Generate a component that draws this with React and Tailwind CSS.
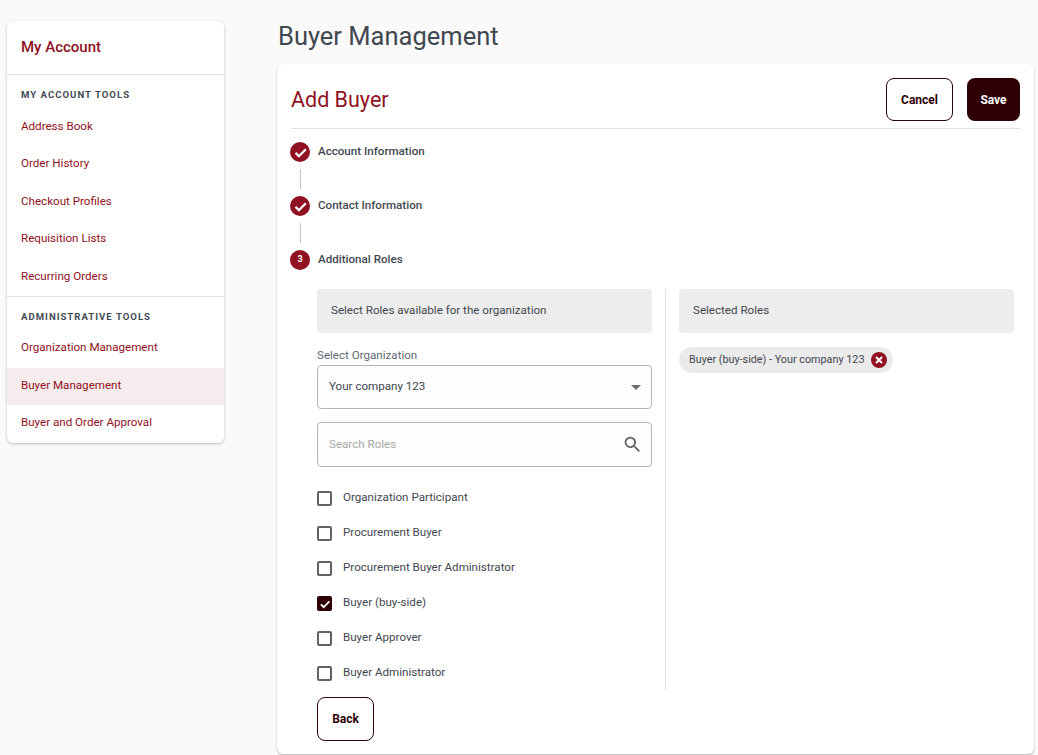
import React from "react";

const accountLinks = ["Address Book", "Order History", "Checkout Profiles", "Requisition Lists", "Recurring Orders"];
const adminLinks = ["Organization Management", "Buyer Management", "Buyer and Order Approval"];
const roles = [
  "Organization Participant",
  "Procurement Buyer",
  "Procurement Buyer Administrator",
  "Buyer (buy-side)",
  "Buyer Approver",
  "Buyer Administrator",
];

const Check = ({ className }) => (
  <svg viewBox="0 0 24 24" className={className} fill="none" stroke="white" strokeWidth="3.2">
    <path d="M5 12.5l4.8 4.8L19.5 7.5" />
  </svg>
);

const SideLink = ({ label, active }) => (
  <div className={`h-[37.4px] pl-3.5 pb-0.5 flex items-center text-[11.6px] text-[#8f1122] ${active ? "bg-[#f6eced]" : ""}`}>
    {label}
  </div>
);

const SideHeading = ({ label, className }) => (
  <div className={`pl-3.5 text-[9.6px] leading-[15px] font-bold tracking-[1px] text-[#424b54] ${className}`}>
    {label}
  </div>
);

const Step = ({ label, number }) => (
  <div className="flex items-center gap-2 h-5">
    <div className="w-5 h-5 rounded-full bg-[#8f1122] flex items-center justify-center text-white text-[9px] font-bold">
      {number || <Check className="w-[17px] h-[17px]" />}
    </div>
    <span className="text-[11.6px] font-medium text-[#3f4750] -mt-px">{label}</span>
  </div>
);

const StepLine = () => <div className="ml-[9.5px] my-[7px] w-px h-5 bg-[#c4c4c4]" />;

const Role = ({ label, checked }) => (
  <div className="flex items-center h-[35px] gap-[11px]">
    {checked ? (
      <div className="w-[15px] h-[15px] rounded-[2px] bg-[#2e0005] flex items-center justify-center">
        <Check className="w-3.5 h-3.5" />
      </div>
    ) : (
      <div className="w-[15px] h-[15px] rounded-[2px] border-2 border-[#5f6368]" />
    )}
    <span className="text-[11.6px] text-[#3f4750] -mt-0.5">{label}</span>
  </div>
);

export default function App() {
  return (
    <div className="min-h-[755px] bg-[#fafafa] flex font-['Roboto',sans-serif] overflow-hidden">
      <aside className="w-[217px] ml-[7px] mt-[21px] self-start bg-white rounded-md shadow-[0_1px_3px_rgba(0,0,0,0.25)] overflow-hidden shrink-0">
        <div className="h-[54px] pl-3.5 flex items-center text-[15px] font-medium text-[#8f1122] border-b border-[#e0e0e0]">
          My Account
        </div>
        <SideHeading label="MY ACCOUNT TOOLS" className="h-[34px] pt-[11.5px]" />
        {accountLinks.map((l) => (
          <SideLink key={l} label={l} />
        ))}
        <div className="border-t border-[#e0e0e0]">
          <SideHeading label="ADMINISTRATIVE TOOLS" className="h-[33.5px] pt-3" />
          {adminLinks.map((l) => (
            <SideLink key={l} label={l} active={l === "Buyer Management"} />
          ))}
        </div>
      </aside>

      <main className="ml-[53px] w-[757px] shrink-0">
        <h1 className="h-[64px] pt-[21px] pl-px text-[25.5px] leading-[30px] text-[#3f4750]">Buyer Management</h1>
        <div className="h-[690px] bg-white rounded-md shadow-[0_1px_2px_rgba(0,0,0,0.3)] pt-3.5 px-3.5">
          <div className="h-[51px] flex justify-between border-b border-[#e0e0e0]">
            <h2 className="text-[21.5px] leading-[44px] text-[#8f1122]">Add Buyer</h2>
            <div className="flex gap-3.5">
              <button className="w-[67px] h-[43px] rounded-lg border border-[#2e0005] bg-white text-xs font-bold text-[#2e0005]">
                Cancel
              </button>
              <button className="w-[53px] h-[43px] rounded-lg bg-[#2e0005] text-xs font-bold text-white">Save</button>
            </div>
          </div>

          <div className="pt-[13px] -ml-px">
            <Step label="Account Information" />
            <StepLine />
            <Step label="Contact Information" />
            <StepLine />
            <Step label="Additional Roles" number="3" />
          </div>

          <div className="mt-[19px] ml-[26px] flex">
            <div className="w-[349px] h-[401px] pr-[13px] border-r border-[#e0e0e0]">
              <div className="h-11 px-3.5 flex items-center rounded bg-[#ededed] text-[11.6px] text-[#3f4750]">
                Select Roles available for the organization
              </div>
              <div className="mt-3.5 text-[11.6px] leading-4 text-[#5f6873]">Select Organization</div>
              <div className="mt-[2px] h-11 px-[11px] flex items-center justify-between rounded border border-[#b5b5b5] bg-[#fdfdfd] text-[11.6px] text-[#3f4750]">
                <span>Your company 123</span>
                <span className="-mr-px w-0 h-0 border-x-[5px] border-x-transparent border-t-[5px] border-t-[#6b6b6b]" />
              </div>
              <div className="mt-[13px] h-[45px] pl-[11px] pr-2 flex items-center justify-between rounded border border-[#b5b5b5] bg-[#fdfdfd] text-[11.6px] text-[#a8a8a8]">
                <span>Search Roles</span>
                <svg viewBox="0 0 24 24" className="w-[21px] h-[21px]" fill="#5f6368">
                  <path d="M15.5 14h-.79l-.28-.27A6.47 6.47 0 0 0 16 9.5 6.5 6.5 0 1 0 9.5 16c1.61 0 3.09-.59 4.23-1.57l.27.28v.79l5 4.99L20.49 19l-4.99-5zm-6 0C7.01 14 5 11.99 5 9.5S7.01 5 9.5 5 14 7.01 14 9.5 11.99 14 9.5 14z" />
                </svg>
              </div>
              <div className="mt-[14px]">
                {roles.map((r) => (
                  <Role key={r} label={r} checked={r === "Buyer (buy-side)"} />
                ))}
              </div>
            </div>
            <div className="flex-1 pl-[13px] pr-1.5">
              <div className="h-11 px-3.5 flex items-center rounded bg-[#ededed] text-[11.6px] text-[#3f4750]">Selected Roles</div>
              <div className="mt-3.5 inline-flex items-center h-[26px] pl-2.5 pr-[6px] gap-[7px] rounded-full bg-[#ebebeb] text-[10.8px] text-[#3f4750]">
                <span>Buyer (buy-side) - Your company 123</span>
                <span className="w-4 h-4 rounded-full bg-[#8f1122] flex items-center justify-center">
                  <svg viewBox="0 0 16 16" className="w-4 h-4" stroke="white" strokeWidth="2">
                    <path d="M5 5l6 6M11 5l-6 6" />
                  </svg>
                </span>
              </div>
            </div>
          </div>

          <button className="mt-[7px] ml-[26px] w-[57px] h-11 rounded-lg border border-[#2e0005] bg-white text-xs font-bold text-[#2e0005]">
            Back
          </button>
        </div>
      </main>
    </div>
  );
}
